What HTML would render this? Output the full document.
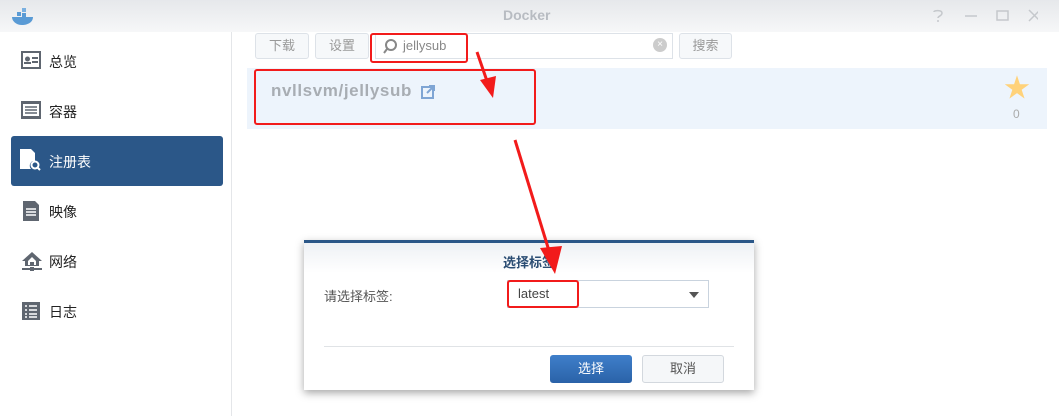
<!DOCTYPE html>
<html><head><meta charset="utf-8"><style>
*{margin:0;padding:0;box-sizing:border-box}
body{width:1059px;height:416px;overflow:hidden;background:#fff;font-family:"Liberation Sans","Noto Sans CJK SC",sans-serif;position:relative;font-size:13px}
.abs{position:absolute}
.title{left:0;top:0;width:1059px;height:32px;background:linear-gradient(#e6e8eb,#f6f7f8)}
.nav{left:0;width:231px;height:50px;color:#222;font-size:14px}
.nav span{position:absolute;left:49px;top:16px}
.nav svg{position:absolute;left:21px;top:15px}
.btn{height:26px;border:1px solid #dde2e8;border-radius:3px;background:#f6f8fa;color:#999;font-size:13px;text-align:center;line-height:24px}
.red{border:2px solid #f21b1b;border-radius:3px}
</style></head><body>
<div class="abs title"></div>
<svg class="abs" style="left:10px;top:6px" width="26" height="20"><path d="M2 11h21c0 5-5 8-11 8S2 15 2 11z" fill="#5a9bd5"/><rect x="7" y="6" width="4" height="4" fill="#5a9bd5"/><rect x="12" y="2" width="4" height="4" fill="#7ab0e0"/><rect x="12" y="7" width="4" height="4" fill="#5a9bd5"/></svg>
<div class="abs" style="left:503px;top:7px;font-weight:bold;color:#b8bcc2;font-size:14px">Docker</div>
<svg class="abs" style="left:928px;top:8px" width="110" height="16" fill="none" stroke="#c5c8cc" stroke-width="1.5"><path d="M6 4c0-2 8-2 8 1s-4 3-4 5M10 12v2"/><path d="M37 8h12"/><rect x="69" y="3" width="11" height="9"/><path d="M101 2l11 11M112 2l-11 11"/></svg>
<div class="abs" style="left:231px;top:32px;width:1px;height:384px;background:#e4e6e9"></div>

<div class="abs nav" style="top:36px"><svg width="20" height="18"><rect x="1" y="1" width="18" height="16" fill="none" stroke="#5f6670" stroke-width="2"/><circle cx="6.5" cy="8" r="2.5" fill="#5f6670"/><rect x="3" y="11" width="7" height="2" fill="#5f6670"/><rect x="11" y="6" width="6" height="2" fill="#5f6670"/><rect x="11" y="10" width="6" height="2" fill="#5f6670"/></svg><span>总览</span></div>
<div class="abs nav" style="top:86px"><svg width="20" height="18"><rect x="0" y="0" width="20" height="2" fill="#5f6670"/><rect x="0" y="16" width="20" height="2" fill="#5f6670"/><rect x="1" y="2" width="18" height="14" fill="none" stroke="#5f6670" stroke-width="2"/><path d="M4 6h12M4 9h12M4 12h12" stroke="#5f6670" stroke-width="1.5"/></svg><span>容器</span></div>
<div class="abs" style="left:11px;top:136px;width:212px;height:50px;background:#2b5788;border-radius:3px;color:#fff;font-size:14px"><svg class="abs" style="left:9px;top:13px" width="22" height="22"><path d="M0 0h11l4 4v8h-2a5 5 0 0 0-2 8H0z" fill="#fff"/><circle cx="15" cy="16" r="3.5" fill="none" stroke="#fff" stroke-width="2"/><path d="M17 18l3 3" stroke="#fff" stroke-width="2"/></svg><span class="abs" style="left:38px;top:16px">注册表</span></div>
<div class="abs nav" style="top:186px"><svg width="20" height="20"><path d="M2 0h12l4 4v16H2z" fill="#5f6670"/><path d="M5 8h10M5 11h10M5 14h10" stroke="#fff" stroke-width="1.5"/></svg><span>映像</span></div>
<div class="abs nav" style="top:236px"><svg width="22" height="20"><path d="M11 1L1 10h3v5h14v-5h3z" fill="#5f6670"/><path d="M7 10L11 6l4 4v4H7z" fill="#fff"/><rect x="9" y="11" width="4" height="4" fill="#5f6670"/><path d="M1 18h20" stroke="#5f6670" stroke-width="2"/><rect x="9" y="16" width="4" height="4" fill="#5f6670"/></svg><span>网络</span></div>
<div class="abs nav" style="top:286px"><svg width="20" height="20"><rect x="1" y="1" width="18" height="18" fill="#5f6670"/><path d="M4 5h2M8 5h8M4 9h2M8 9h8M4 13h2M8 13h8M4 16h2M8 16h8" stroke="#fff" stroke-width="1.5"/></svg><span>日志</span></div>

<div class="abs btn" style="left:255px;top:33px;width:54px">下载</div>
<div class="abs btn" style="left:315px;top:33px;width:54px">设置</div>
<div class="abs" style="left:375px;top:33px;width:298px;height:26px;border:1px solid #dde2e8;background:#fff"></div>
<div class="abs" style="left:653px;top:38px;width:14px;height:14px;border-radius:50%;background:#ccc;color:#fff;font-size:10px;text-align:center;line-height:14px">×</div>
<div class="abs btn" style="left:679px;top:33px;width:53px">搜索</div>
<div class="abs red" style="left:370px;top:33px;width:98px;height:30px"></div>
<svg class="abs" style="left:382px;top:38px" width="16" height="16"><circle cx="9" cy="7" r="5" stroke="#888" stroke-width="2" fill="none"/><path d="M5 11l-3 4" stroke="#888" stroke-width="2"/></svg>
<div class="abs" style="left:403px;top:38px;color:#888;font-size:13px">jellysub</div>

<div class="abs" style="left:247px;top:68px;width:800px;height:61px;background:#edf4fc"></div>
<div class="abs red" style="left:254px;top:69px;width:282px;height:56px"></div>
<div class="abs" style="left:271px;top:81px;color:#a8adb3;font-weight:bold;font-size:17px;letter-spacing:0.6px">nvllsvm/jellysub</div>
<svg class="abs" style="left:421px;top:85px" width="14" height="14"><rect x="1" y="2" width="11" height="11" fill="none" stroke="#7fa5d4" stroke-width="2"/><path d="M6 8l6-6M8 1h5v5" stroke="#7fa5d4" stroke-width="2" fill="none"/></svg>
<div class="abs" style="left:1004px;top:75px;color:#ffd27a;font-size:26px;line-height:26px">★</div>
<div class="abs" style="left:1013px;top:107px;color:#aaa;font-size:12px">0</div>

<div class="abs" style="left:304px;top:240px;width:450px;height:150px;background:#fff;border-top:3px solid #2b5788;box-shadow:0 3px 8px rgba(0,0,0,.35)"></div>
<div class="abs" style="left:304px;top:243px;width:450px;height:30px;background:linear-gradient(#eef1f5,#fff)"></div>
<div class="abs" style="left:503px;top:252px;color:#2b4d73;font-weight:bold;font-size:13px">选择标签</div>
<div class="abs" style="left:324px;top:286px;color:#555;font-size:13px">请选择标签:</div>
<div class="abs" style="left:507px;top:280px;width:202px;height:28px;border:1px solid #c9d3de"></div>
<div class="abs red" style="left:507px;top:280px;width:72px;height:28px"></div>
<div class="abs" style="left:518px;top:286px;color:#444;font-size:13px">latest</div>
<div class="abs" style="left:689px;top:292px;width:0;height:0;border-left:5px solid transparent;border-right:5px solid transparent;border-top:6px solid #555"></div>
<div class="abs" style="left:324px;top:346px;width:410px;height:1px;background:#e0e3e6"></div>
<div class="abs" style="left:550px;top:355px;width:82px;height:28px;background:linear-gradient(#3f7fca,#2a62a8);border-radius:3px;color:#fff;text-align:center;line-height:28px">选择</div>
<div class="abs" style="left:642px;top:355px;width:82px;height:28px;background:#f5f7f9;border:1px solid #d3d8de;border-radius:3px;color:#555;text-align:center;line-height:26px">取消</div>

<svg class="abs" style="left:0;top:0" width="1059" height="416"><path d="M477 52L488 84" stroke="#f21b1b" stroke-width="3"/><path d="M480 80L493 98L496 76z" fill="#f21b1b"/><path d="M515 140L550 254" stroke="#f21b1b" stroke-width="3"/><path d="M540 248L555 274L562 246z" fill="#f21b1b"/></svg>
</body></html>
